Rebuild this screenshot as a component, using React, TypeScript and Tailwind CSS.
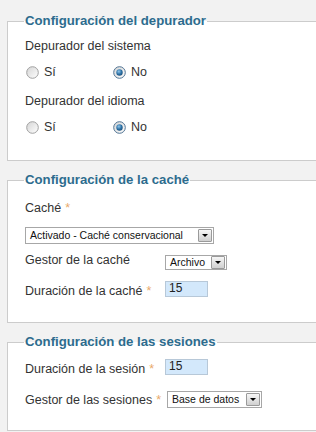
import React from "react";

function Radio({ checked }: { checked?: boolean }) {
  return (
    <svg width="13" height="13" viewBox="0 0 13 13" className="shrink-0">
      <defs>
        <linearGradient id={checked ? "rgc" : "rgu"} x1="0" y1="0" x2="1" y2="1">
          <stop offset="0" stopColor="#d4d4d4" />
          <stop offset="1" stopColor="#ffffff" />
        </linearGradient>
        <radialGradient id="dot" cx="0.4" cy="0.35" r="0.7">
          <stop offset="0" stopColor="#8fc6ec" />
          <stop offset="0.6" stopColor="#2b6fa3" />
          <stop offset="1" stopColor="#1d4f7a" />
        </radialGradient>
      </defs>
      <circle
        cx="6.5"
        cy="6.5"
        r="5.8"
        fill={`url(#${checked ? "rgc" : "rgu"})`}
        stroke={checked ? "#4f7393" : "#a0a0a0"}
        strokeWidth="1"
      />
      {checked && <circle cx="6.5" cy="6.5" r="3.2" fill="url(#dot)" />}
    </svg>
  );
}

function Star() {
  return <span className="text-[#e9a86a] ml-[4px]">*</span>;
}

function SelectBox({ text, width, height }: { text: string; width: string; height: string }) {
  return (
    <div
      className={`flex items-center justify-between bg-white border border-[#a7a7a7] pl-[4px] pr-[1px] ${width} ${height}`}
    >
      <span className="text-[10.5px] text-[#111] leading-none whitespace-nowrap">{text}</span>
      <span className="flex items-center justify-center w-[14px] h-[13px] border border-[#9a9a9a] bg-gradient-to-b from-[#f6f6f6] to-[#d0d0d0] rounded-[1px]">
        <svg width="6" height="3" viewBox="0 0 6 3">
          <polygon points="0,0 6,0 3,3" fill="#000" />
        </svg>
      </span>
    </div>
  );
}

function TextBox({ value }: { value: string }) {
  return (
    <div className="w-[43px] h-[16px] bg-[#d3e8fb] border border-[#b7c8d8] pl-[3px] text-[12px] leading-[13px] text-[#222]">
      {value}
    </div>
  );
}

function Fieldset({ title, children, className }: { title: string; children: React.ReactNode; className?: string }) {
  return (
    <fieldset
      className={`ml-[7px] w-[330px] border-t border-b border-l border-[#cccccc] bg-white pl-[17px] ${className ?? ""}`}
    >
      <legend className="px-[1px] -ml-[1px] text-[13.2px] leading-[16px] font-bold text-[#2d6c8e]">{title}</legend>
      {children}
    </fieldset>
  );
}

function RadioRow() {
  return (
    <div className="flex items-center h-[16px] mt-[10px]">
      <div className="flex items-center w-[88px] pl-[1px]">
        <Radio />
        <span className="ml-[5px]">Sí</span>
      </div>
      <div className="flex items-center">
        <Radio checked />
        <span className="ml-[5px]">No</span>
      </div>
    </div>
  );
}

export default function App() {
  return (
    <div
      className="w-[316px] h-[432px] overflow-hidden bg-[#f2f2f2] pt-[13px] text-[12.5px] leading-[16px] text-[#333]"
      style={{ fontFamily: '"Liberation Sans", Arial, sans-serif' }}
    >
      <Fieldset title="Configuración del depurador" className="pb-[25px]">
        <div className="mt-[9px] h-[16px]">Depurador del sistema</div>
        <RadioRow />
        <div className="mt-[13px] h-[16px]">Depurador del idioma</div>
        <RadioRow />
      </Fieldset>

      <Fieldset title="Configuración de la caché" className="mt-[11px] pb-[23px]">
        <div className="mt-[12px] h-[16px]">
          Caché
          <Star />
        </div>
        <div className="mt-[11px]">
          <SelectBox text="Activado - Caché conservacional" width="w-[189px]" height="h-[17px]" />
        </div>
        <div className="mt-[8px] flex items-start">
          <div className="min-w-[140px] pr-[6px] h-[16px]">Gestor de la caché</div>
          <div className="mt-[3px]">
            <SelectBox text="Archivo" width="w-[62px]" height="h-[15px]" />
          </div>
        </div>
        <div className="mt-[11px] flex items-start">
          <div className="min-w-[140px] pr-[6px] mt-[2px] h-[16px]">
            Duración de la caché
            <Star />
          </div>
          <TextBox value="15" />
        </div>
      </Fieldset>

      <Fieldset title="Configuración de las sesiones" className="mt-[11px] pb-[22px]">
        <div className="mt-[9px] flex items-start">
          <div className="min-w-[140px] pr-[6px] mt-[2px] h-[16px]">
            Duración de la sesión
            <Star />
          </div>
          <TextBox value="15" />
        </div>
        <div className="mt-[14px] flex items-start">
          <div className="min-w-[140px] pr-[6px] mt-[1px] h-[16px] whitespace-nowrap">
            Gestor de las sesiones
            <Star />
          </div>
          <SelectBox text="Base de datos" width="w-[95px]" height="h-[17px]" />
        </div>
      </Fieldset>
    </div>
  );
}
